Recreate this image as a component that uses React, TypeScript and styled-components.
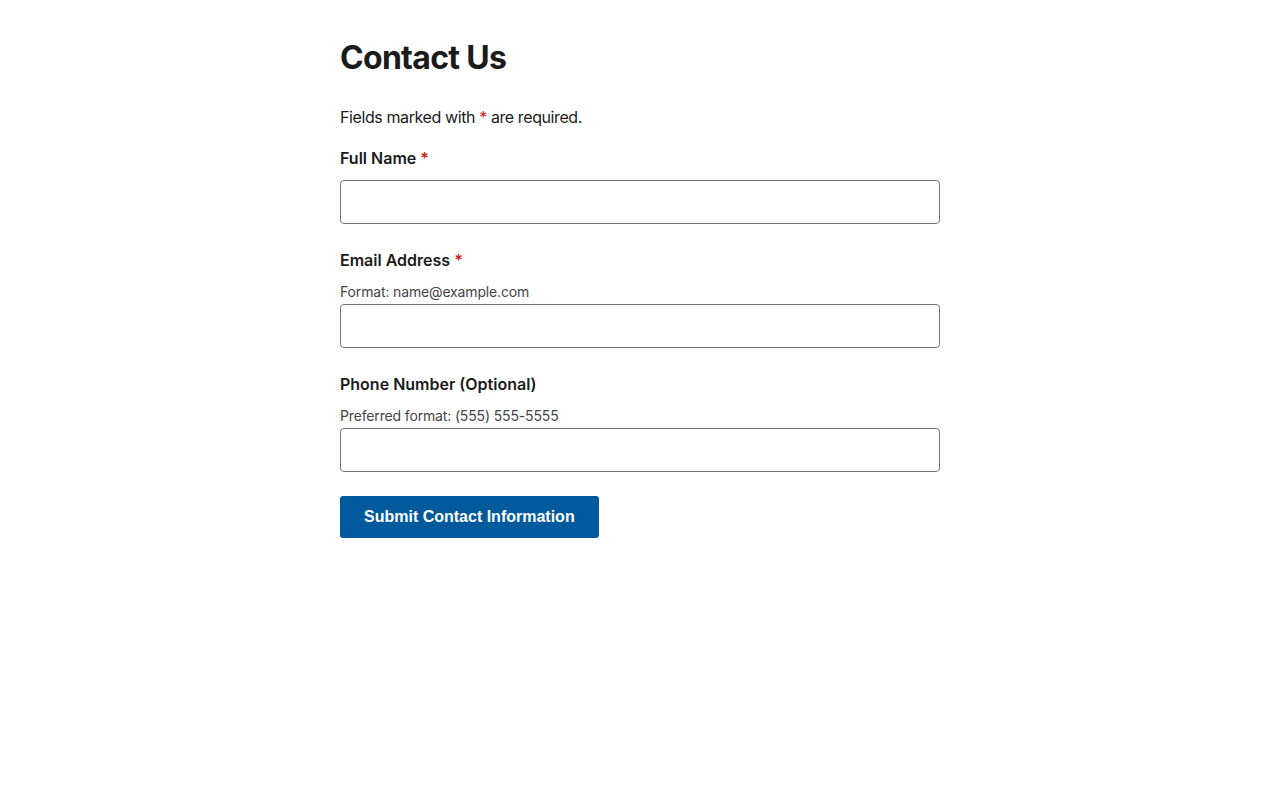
import styled, { createGlobalStyle } from 'styled-components'

const GlobalStyle = createGlobalStyle`
	body {
		margin: 0;
		background: #ffffff;
		color: #1b1b1b;
		font-family: Inter, "Noto Sans", sans-serif;
	}
`

export default function App() {
	return (
		<>
			<GlobalStyle />
			<Page>
				<Title>Contact Us</Title>
				<Intro>
					Fields marked with <Required>*</Required> are required.
				</Intro>
				<form onSubmit={(e) => e.preventDefault()}>
					<Field>
						<Label htmlFor="name">
							Full Name <Required>*</Required>
						</Label>
						<Input id="name" type="text" />
					</Field>
					<Field>
						<Label htmlFor="email">
							Email Address <Required>*</Required>
						</Label>
						<Hint>Format: name@example.com</Hint>
						<Input id="email" type="email" />
					</Field>
					<Field>
						<Label htmlFor="phone">Phone Number (Optional)</Label>
						<Hint>Preferred format: (555) 555-5555</Hint>
						<Input id="phone" type="tel" />
					</Field>
					<SubmitButton type="submit">Submit Contact Information</SubmitButton>
				</form>
			</Page>
		</>
	)
}

const Page = styled.main`
	width: 600px;
	margin: 0 auto;
	padding-top: 38px;
`

const Title = styled.h1`
	margin: 0 0 27px;
	font-size: 32px;
	line-height: 40px;
	font-weight: 700;
	letter-spacing: -0.7px;
`

const Intro = styled.p`
	margin: 0 0 17px;
	font-size: 16px;
	line-height: 24px;
	letter-spacing: -0.4px;
`

const Required = styled.span`
	color: #d21d1d;
`

const Field = styled.div`
	margin-bottom: 24px;
`

const Label = styled.label`
	display: block;
	margin-bottom: 10px;
	font-size: 16px;
	line-height: 24px;
	font-weight: 600;
`

const Hint = styled.span`
	display: block;
	margin-bottom: 2px;
	font-size: 14px;
	line-height: 20px;
	color: #454545;
	letter-spacing: -0.15px;
`

const Input = styled.input`
	display: block;
	box-sizing: border-box;
	width: 100%;
	height: 44px;
	padding: 0 12px;
	border: 1px solid #767676;
	border-radius: 4px;
	font-family: Inter, "Noto Sans", sans-serif;
	font-size: 16px;
	background: #ffffff;
`

const SubmitButton = styled.button`
	display: block;
	height: 42px;
	padding: 0 24px;
	border: none;
	border-radius: 3px;
	background: #005a9c;
	color: #ffffff;
	font-family: "Liberation Sans", Arial, sans-serif;
	font-size: 16px;
	font-weight: 700;
	cursor: pointer;
`
